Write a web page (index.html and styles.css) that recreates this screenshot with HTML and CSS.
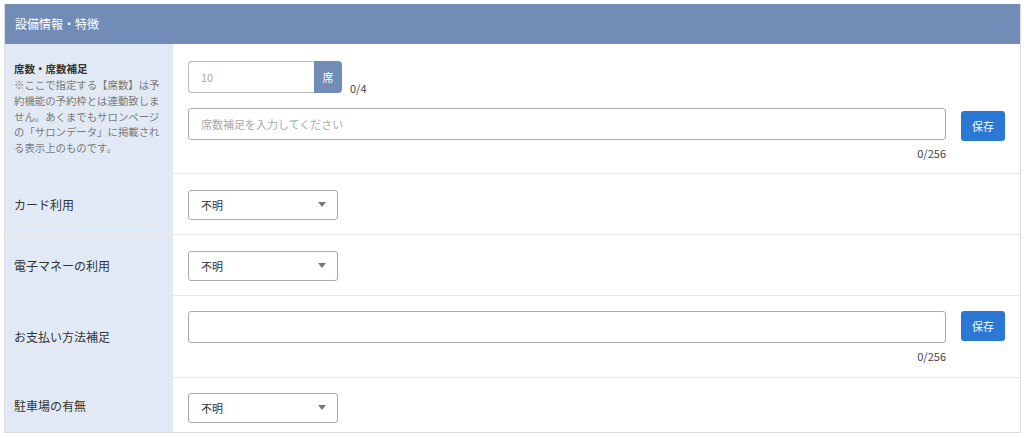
FILE: index.html
```html
<!DOCTYPE html>
<html lang="ja">
<head>
  <meta charset="UTF-8" />
  <title>設備情報・特徴</title>
  <link rel="stylesheet" href="styles.css">
</head>
<body>
  <div class="panel">
    <div class="panel-head">設備情報・特徴</div>

    <div class="row row-seats">
      <div class="label">
        <strong>席数・席数補足</strong>
        <span class="note">※ここで指定する【席数】は予約機能の予約枠とは連動致しません。あくまでもサロンページの「サロンデータ」に掲載される表示上のものです。</span>
      </div>
      <div class="field">
        <div class="seat-line">
          <div class="seat-group">
            <input type="text" class="seat-input" placeholder="10">
            <span class="seat-unit">席</span>
          </div>
          <span class="count">0/4</span>
        </div>
        <div class="text-line">
          <div class="text-col">
            <textarea class="text-box" placeholder="席数補足を入力してください"></textarea>
            <span class="count count-right">0/256</span>
          </div>
          <button class="save">保存</button>
        </div>
      </div>
    </div>

    <div class="row">
      <div class="label">カード利用</div>
      <div class="field">
        <div class="select">不明<span class="caret"></span></div>
      </div>
    </div>

    <div class="row">
      <div class="label">電子マネーの利用</div>
      <div class="field">
        <div class="select">不明<span class="caret"></span></div>
      </div>
    </div>

    <div class="row row-pay">
      <div class="label">お支払い方法補足</div>
      <div class="field">
        <div class="text-line">
          <div class="text-col">
            <textarea class="text-box"></textarea>
            <span class="count count-right">0/256</span>
          </div>
          <button class="save">保存</button>
        </div>
      </div>
    </div>

    <div class="row row-last">
      <div class="label">駐車場の有無</div>
      <div class="field">
        <div class="select">不明<span class="caret"></span></div>
      </div>
    </div>
  </div>
</body>
</html>
```

FILE: styles.css
```css
body {
  margin: 0;
  padding: 4px;
  font-family: "Noto Sans CJK JP", "Noto Sans", sans-serif;
  color: #333;
  background: #fff;
}
.panel {
  width: 1015px;
  border: 1px solid #dcdcdc;
  border-top: none;
}
.panel-head {
  height: 40px;
  line-height: 40px;
  padding-left: 10px;
  background-color: #728cb8;
  color: #fff;
  font-size: 12px;
}
.row {
  display: grid;
  grid-template-columns: 168px 1fr;
  border-top: 1px solid #e8e8e8;
}
.panel-head + .row {
  border-top: none;
}
.label {
  background-color: #e1eaf4;
  display: flex;
  flex-direction: column;
  justify-content: center;
  padding: 0 6px 0 9px;
  font-size: 12px;
  color: #333;
}
.label strong {
  font-size: 10.5px;
  line-height: 16px;
}
.note {
  font-size: 10.4px;
  line-height: 15.7px;
  color: #7a7a7a;
}
.field {
  padding: 15px 15px 14px 15px;
  display: flex;
  flex-direction: column;
  justify-content: center;
  min-height: 31px;
}
.row-seats .field {
  padding-top: 17px;
  padding-bottom: 13px;
}
.seat-line {
  display: flex;
  align-items: flex-end;
  gap: 8px;
  margin-bottom: 15px;
}
.seat-group {
  display: flex;
  height: 32px;
}
.seat-input {
  width: 126px;
  box-sizing: border-box;
  border: 1px solid #bbb;
  border-right: none;
  border-radius: 4px 0 0 4px;
  padding: 0 12px;
  font-family: inherit;
  font-size: 11px;
  color: #333;
}
.seat-input::placeholder, .text-box::placeholder {
  color: #aaa;
}
.seat-unit {
  width: 28px;
  background-color: #728cb8;
  color: #fff;
  font-size: 11px;
  display: flex;
  align-items: center;
  justify-content: center;
  border-radius: 0 4px 4px 0;
}
.count {
  font-size: 11px;
  color: #444;
  line-height: 14px;
  margin-bottom: -2px;
}
.text-line {
  display: flex;
  gap: 15px;
  align-items: flex-start;
}
.text-col {
  flex: 1;
  display: flex;
  flex-direction: column;
}
.text-box {
  height: 32px;
  box-sizing: border-box;
  border: 1px solid #aaa;
  border-radius: 3px;
  padding: 7px 12px;
  font-family: inherit;
  font-size: 11px;
  resize: none;
  display: block;
}
.count-right {
  align-self: flex-end;
  margin: 6px 0 0;
}
.save {
  width: 44px;
  height: 30px;
  margin-top: 3px;
  border: none;
  border-radius: 3px;
  background-color: #2b78d4;
  color: #fff;
  font-family: inherit;
  font-size: 11px;
  cursor: pointer;
}
.row-pay .field {
  padding-bottom: 14px;
}
.row-pay .save {
  margin-top: 0;
}
.select {
  width: 150px;
  height: 30px;
  box-sizing: border-box;
  border: 1px solid #aaa;
  border-radius: 3px;
  padding: 0 12px;
  display: flex;
  align-items: center;
  justify-content: space-between;
  font-size: 11px;
  color: #333;
}
.caret {
  width: 0;
  height: 0;
  border-left: 4px solid transparent;
  border-right: 4px solid transparent;
  border-top: 5px solid #777;
  margin-right: -1px;
}
.row-last .field {
  padding-top: 14px;
  padding-bottom: 9px;
}
```
